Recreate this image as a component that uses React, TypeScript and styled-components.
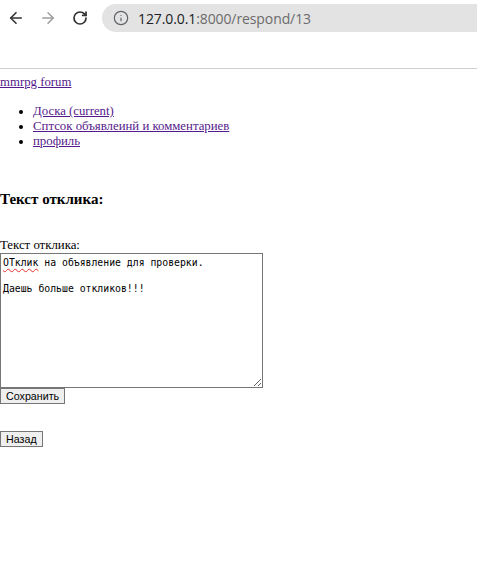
import React from "react";
import styled, {createGlobalStyle} from "styled-components";
import {ArrowLeft, ArrowRight, RotateCw, Info} from "lucide-react";

const GlobalStyle = createGlobalStyle`
  html, body {
    margin: 0;
    padding: 0;
    background: #fff;
  }

  body {
    font-family: "Liberation Serif", "Times New Roman", serif;
    font-size: 12.8px;
    color: #000;
  }
`;

const BrowserBar = styled.div`
  height: 69px;
  box-sizing: border-box;
  border-bottom: 1px solid #cfcfcf;
  padding-top: 4px;
  overflow: hidden;
`;

const BarRow = styled.div`
  display: flex;
  align-items: center;
  height: 28px;
`;

const NavButton = styled.div<{ $muted?: boolean }>`
  width: 32px;
  height: 28px;
  display: flex;
  align-items: center;
  justify-content: center;
  color: ${p => p.$muted ? "#9e9e9e" : "#333"};
`;

const Omnibox = styled.div`
  margin-left: 6px;
  flex: 1;
  height: 28px;
  border-radius: 14px 0 0 14px;
  background: #e3e3e3;
  display: flex;
  align-items: center;
  padding-left: 11px;
  gap: 9px;
  color: #5f6368;
`;

const UrlText = styled.span`
  font-family: "Segoe UI", "Open Sans", Roboto, sans-serif;
  font-size: 14px;
  color: #6b6b6b;
  letter-spacing: -0.1px;

  b {
    font-weight: normal;
    color: #202124;
  }
`;

const Page = styled.div`
  padding-top: 6px;
`;

const Brand = styled.a`
  color: #551a8b;
  text-decoration: underline;
  line-height: 15px;
  display: inline-block;
`;

const NavList = styled.ul`
  margin: 14px 0 0;
  padding-left: 33px;
  list-style: disc;
`;

const NavItem = styled.li`
  line-height: 15px;

  a {
    color: #551a8b;
  }
`;

const Heading = styled.h3`
  margin: 42px 0 0;
  font-size: 15px;
  line-height: 17px;
  font-weight: bold;
`;

const Form = styled.form`
  margin-top: 30px;
  display: flex;
  flex-direction: column;
  align-items: flex-start;
`;

const Label = styled.label`
  line-height: 15px;
`;

const Field = styled.div`
  position: relative;
  width: 263px;
  height: 135px;
`;

const TextBox = styled.textarea`
  display: block;
  width: 263px;
  height: 135px;
  box-sizing: border-box;
  margin: 0;
  padding: 2px;
  border: 1px solid #767676;
  font-family: "DejaVu Sans Mono", "Liberation Mono", monospace;
  font-size: 9.8px;
  line-height: 13px;
  color: #000;
  background: #fff;
  resize: both;
  outline: none;
`;

// spellcheck mark over the misspelled first word
const Squiggle = styled.span`
  position: absolute;
  left: 3px;
  top: 3px;
  font-family: "DejaVu Sans Mono", "Liberation Mono", monospace;
  font-size: 9.8px;
  line-height: 13px;
  color: transparent;
  text-decoration: underline wavy #e0312c;
  text-decoration-thickness: 1px;
  text-underline-offset: 2px;
  pointer-events: none;
`;

const PlainButton = styled.button<{ $gap?: number }>`
  margin: ${p => p.$gap ?? 0}px 0 0;
  padding: 1px 5px;
  height: 16px;
  box-sizing: border-box;
  font-family: "Liberation Sans", Arial, sans-serif;
  font-size: 10.7px;
  line-height: 12px;
  color: #000;
  background: #efefef;
  border: 1px solid #767676;
  border-radius: 0;
`;

export default function App() {
  return (
    <>
      <GlobalStyle/>
      <BrowserBar>
        <BarRow>
          <NavButton><ArrowLeft size={18} strokeWidth={2.2}/></NavButton>
          <NavButton $muted><ArrowRight size={18} strokeWidth={2}/></NavButton>
          <NavButton><RotateCw size={16} strokeWidth={2.6}/></NavButton>
          <Omnibox>
            <Info size={16} strokeWidth={1.8}/>
            <UrlText><b>127.0.0.1</b>:8000/respond/13</UrlText>
          </Omnibox>
        </BarRow>
      </BrowserBar>
      <Page>
        <Brand href="#">mmrpg forum</Brand>
        <NavList>
          <NavItem><a href="#">Доска (current)</a></NavItem>
          <NavItem><a href="#">Сптсок объявлеинй и комментариев</a></NavItem>
          <NavItem><a href="#">профиль</a></NavItem>
        </NavList>
        <Heading>Текст отклика:</Heading>
        <Form onSubmit={e => e.preventDefault()}>
          <Label htmlFor="text">Текст отклика:</Label>
          <Field>
            <TextBox
              id="text"
              spellCheck={false}
              defaultValue={"ОТклик на объявление для проверки.\n\nДаешь больше откликов!!!"}
            />
            <Squiggle aria-hidden>ОТклик</Squiggle>
          </Field>
          <PlainButton type="submit">Сохранить</PlainButton>
          <PlainButton type="button" $gap={27}>Назад</PlainButton>
        </Form>
      </Page>
    </>
  );
}
